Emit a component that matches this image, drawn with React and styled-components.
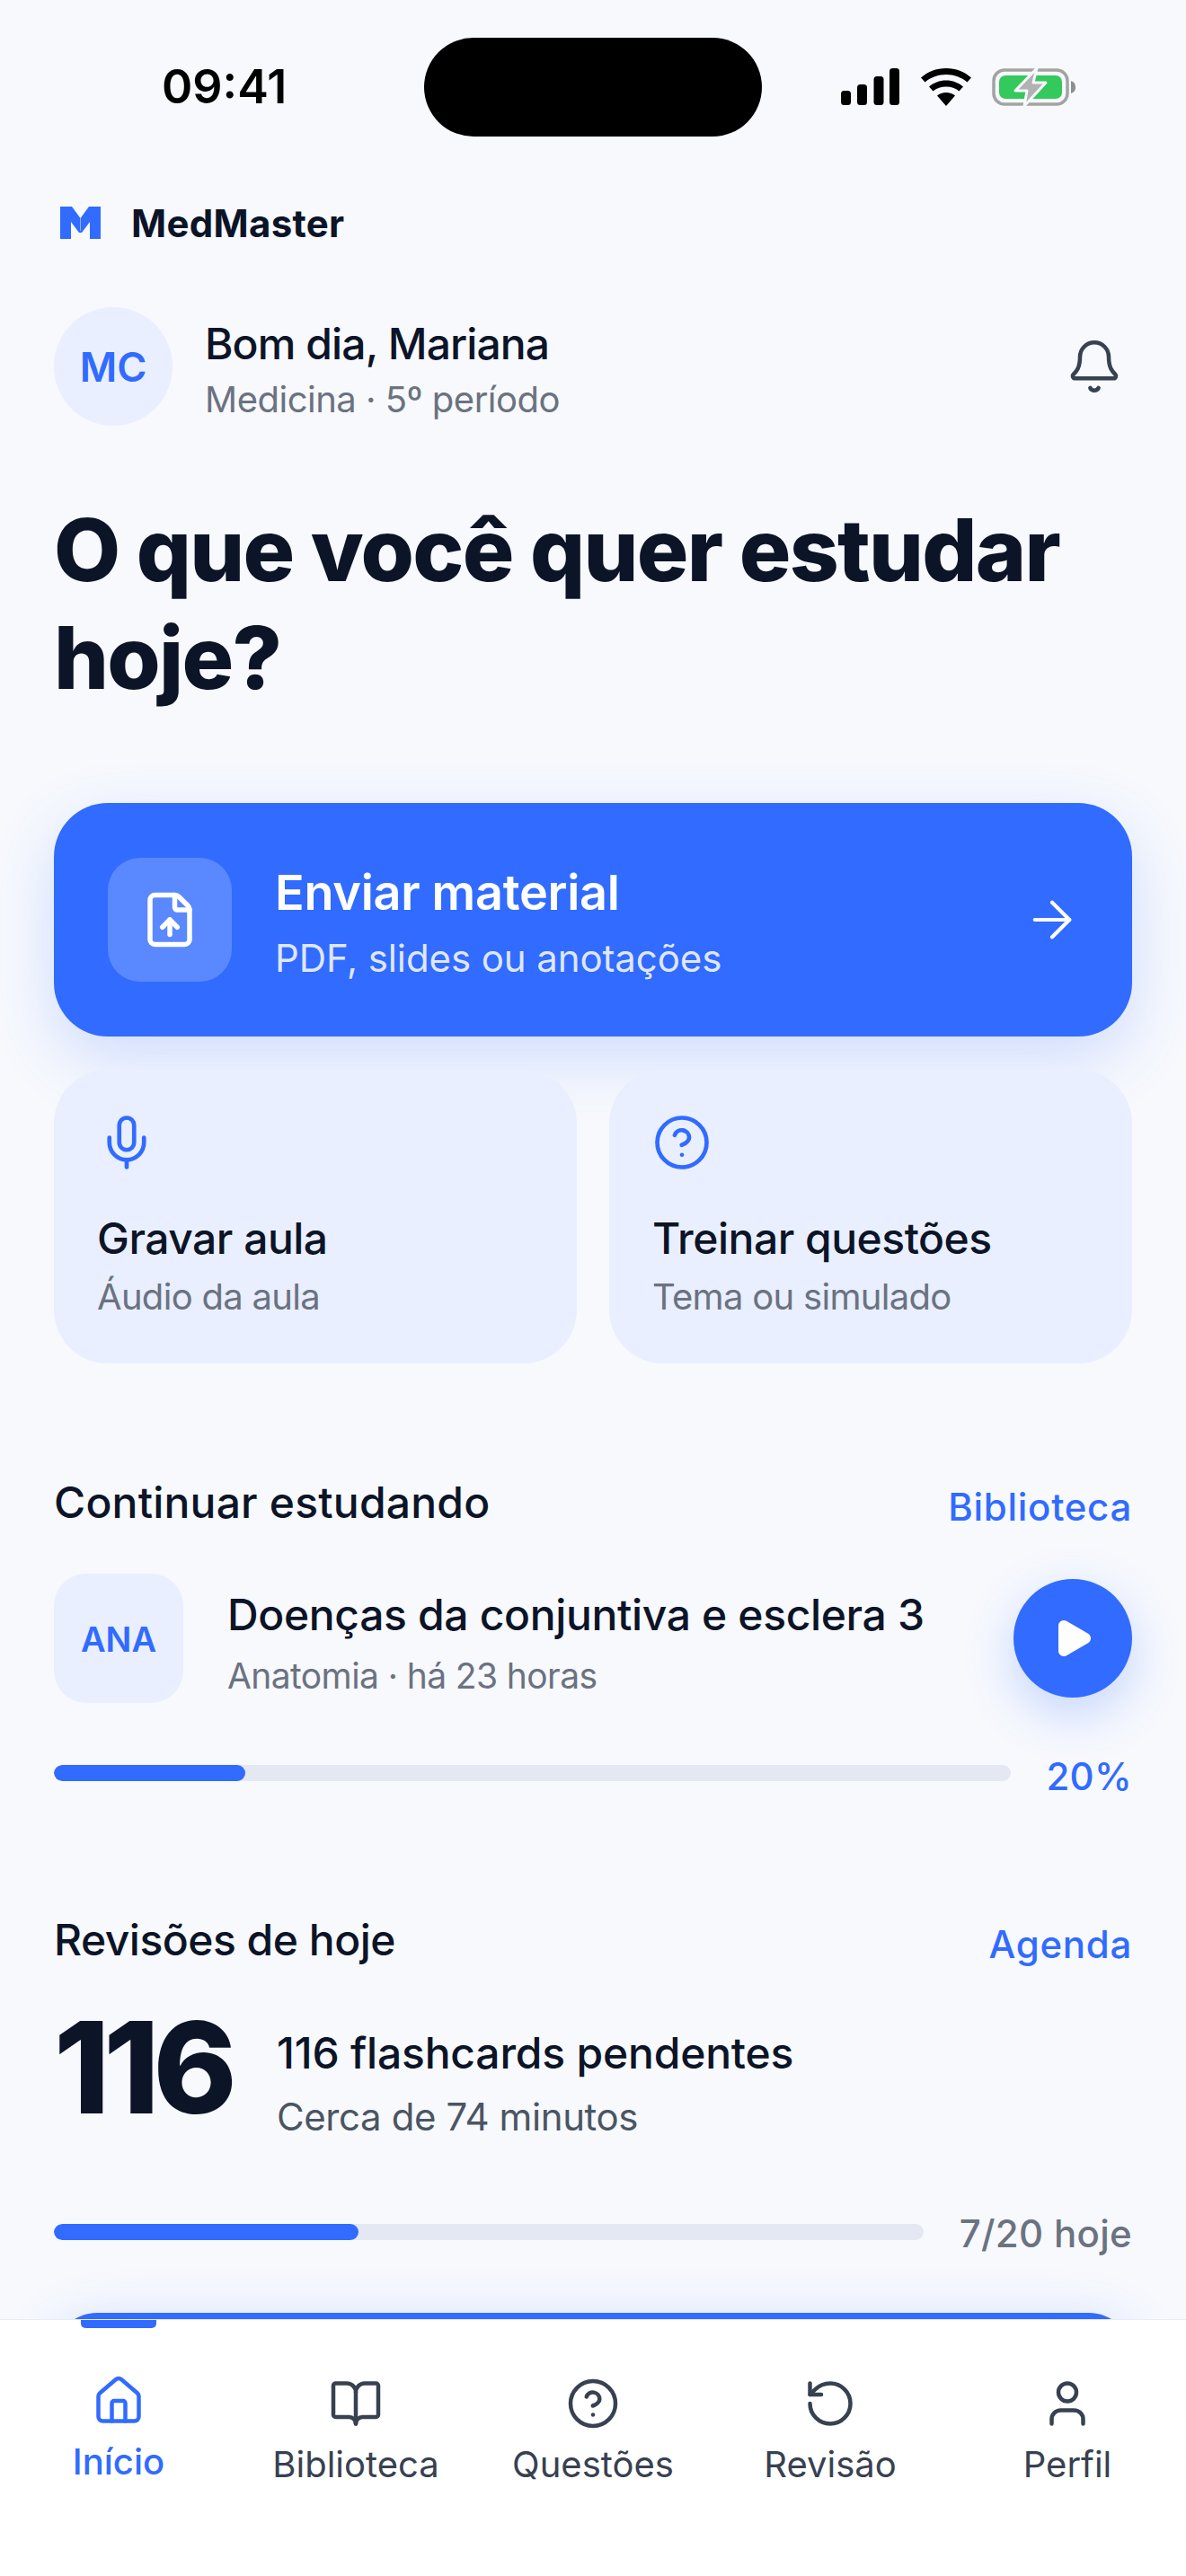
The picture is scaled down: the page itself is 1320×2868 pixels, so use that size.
import React from "react";
import styled, { createGlobalStyle } from "styled-components";
import { ArrowRight, Bell, BookOpen, CircleHelp, FileUp, House, Mic, Play, RotateCcw, User } from "lucide-react";

const BLUE = "#316bff";
const INK = "#0c1427";
const GRAY = "#6b7280";

const GlobalStyle = createGlobalStyle`
  html, body { margin: 0; padding: 0; background: #f7f9fd; }
  * { box-sizing: border-box; }
  body { font-family: Inter, "Noto Sans", sans-serif; }
`;

function App() {
  return (
    <Screen>
      <GlobalStyle />
      <Main>
        <StatusBar>
          <Time>09:41</Time>
          <Island />
          <StatusIcons>
            <svg width="66" height="42" viewBox="0 0 66 42" fill="#000">
              <rect x="0" y="25" width="11" height="16" rx="3.500" />
              <rect x="18" y="18" width="11" height="23" rx="3.500" />
              <rect x="36.500" y="9" width="11" height="32" rx="3.500" />
              <rect x="54" y="0" width="11" height="41" rx="3.500" />
            </svg>
            <svg width="58" height="42" viewBox="0 0 58 42" fill="#000">
              <path d="M29 0c11 0 20.500 4 28 10.500l-4.500 5C46 10 38 7 29 7S12 10 5.500 15.500L1 10.500C8.500 4 18 0 29 0z" />
              <path d="M29 13.500c7.500 0 14 2.700 19 7l-4.500 5C39.500 22.200 34.500 20.500 29 20.500s-10.500 1.700-14.500 5L10 20.500c5-4.300 11.500-7 19-7z" />
              <path d="M29 27c4 0 7.500 1.300 10 3.500L29 42 19 30.500c2.500-2.200 6-3.500 10-3.500z" />
            </svg>
            <svg width="93" height="46" viewBox="0 0 93 46">
              <rect x="2" y="4" width="82" height="38" rx="12" fill="none" stroke="#a3a3a3" strokeWidth="3.500" />
              <rect x="8" y="10" width="70" height="26" rx="7" fill="#34c95c" />
              <path d="M88 16c3 1 5 3 5 7s-2 6-5 7z" fill="#8e8e8e" />
              <path d="M50 2 26 27h13l-3 17 24-26H46z" fill="#b2b2b2" stroke="#f7f9fd" strokeWidth="3" strokeLinejoin="round" />
            </svg>
          </StatusIcons>
        </StatusBar>

        <Content>
          <Brand>
            <svg width="45" height="36" viewBox="0 0 45 36">
              <path d="M0 0h13l9.500 13L32 0h13v36H33V17l-9 12h-3l-9-12v19H0z" fill={BLUE} />
              <path d="M22.500 13v14" stroke="#8fb0ff" strokeWidth="1" />
            </svg>
            <BrandName>MedMaster</BrandName>
          </Brand>

          <Profile>
            <Avatar>MC</Avatar>
            <ProfileText>
              <Greeting>Bom dia, Mariana</Greeting>
              <Course>Medicina · 5º período</Course>
            </ProfileText>
            <Bell size={64} strokeWidth={1.7} color="#374151" />
          </Profile>

          <Headline>O que você quer estudar hoje?</Headline>

          <PrimaryCard>
            <PrimaryIcon>
              <FileUp size={66} strokeWidth={2} color="#fff" />
            </PrimaryIcon>
            <PrimaryText>
              <PrimaryTitle>Enviar material</PrimaryTitle>
              <PrimarySub>PDF, slides ou anotações</PrimarySub>
            </PrimaryText>
            <ArrowRight size={66} strokeWidth={1.5} color="#fff" />
          </PrimaryCard>

          <ActionGrid>
            <ActionCard>
              <ActionIcon><Mic size={66} strokeWidth={1.7} color={BLUE} /></ActionIcon>
              <ActionTitle>Gravar aula</ActionTitle>
              <ActionSub>Áudio da aula</ActionSub>
            </ActionCard>
            <ActionCard>
              <ActionIcon><CircleHelp size={66} strokeWidth={1.7} color={BLUE} /></ActionIcon>
              <ActionTitle>Treinar questões</ActionTitle>
              <ActionSub>Tema ou simulado</ActionSub>
            </ActionCard>
          </ActionGrid>

          <SectionHead $top={125}>
            <SectionTitle $spacing={0.2}>Continuar estudando</SectionTitle>
            <SectionLink>Biblioteca</SectionLink>
          </SectionHead>

          <LessonRow>
            <Thumb>ANA</Thumb>
            <LessonText>
              <LessonTitle>Doenças da conjuntiva e esclera 3</LessonTitle>
              <LessonSub>Anatomia · há 23 horas</LessonSub>
            </LessonText>
            <PlayButton>
              <Play size={48} fill="#fff" color="#fff" strokeWidth={2} />
            </PlayButton>
          </LessonRow>

          <ProgressRow $top={69}>
            <Track $width={1065}>
              <Fill style={{ width: "20%" }} />
            </Track>
            <Percent>20%</Percent>
          </ProgressRow>

          <SectionHead $top={147}>
            <SectionTitle $spacing={-0.5}>Revisões de hoje</SectionTitle>
            <SectionLink>Agenda</SectionLink>
          </SectionHead>

          <ReviewRow>
            <BigNumber>116</BigNumber>
            <ReviewText>
              <ReviewTitle>116 flashcards pendentes</ReviewTitle>
              <ReviewSub>Cerca de 74 minutos</ReviewSub>
            </ReviewText>
          </ReviewRow>

          <ProgressRow $top={93}>
            <Track $width={968}>
              <Fill style={{ width: "35%" }} />
            </Track>
            <TodayCount>7/20 hoje</TodayCount>
          </ProgressRow>

          <ReviewButton />
        </Content>
      </Main>

      <Nav>
        <NavIndicator />
        <NavItem $active>
          <House size={60} strokeWidth={1.8} />
          <NavLabel $active>Início</NavLabel>
        </NavItem>
        <NavItem>
          <BookOpen size={60} strokeWidth={1.8} />
          <NavLabel>Biblioteca</NavLabel>
        </NavItem>
        <NavItem>
          <CircleHelp size={60} strokeWidth={1.8} />
          <NavLabel>Questões</NavLabel>
        </NavItem>
        <NavItem>
          <RotateCcw size={60} strokeWidth={1.8} />
          <NavLabel>Revisão</NavLabel>
        </NavItem>
        <NavItem>
          <User size={60} strokeWidth={1.8} />
          <NavLabel>Perfil</NavLabel>
        </NavItem>
      </Nav>
    </Screen>
  );
}

const Screen = styled.div`
  width: 1320px;
  height: 2868px;
  display: flex;
  flex-direction: column;
  overflow: hidden;
  background: #f7f9fd;
  color: ${INK};
`;

const Main = styled.main`
  flex: 1;
  min-height: 0;
  overflow: hidden;
`;

const StatusBar = styled.div`
  height: 194px;
  padding: 42px 60px 0 180px;
  display: flex;
  align-items: flex-start;
`;

const Time = styled.div`
  width: 292px;
  height: 110px;
  line-height: 110px;
  font-size: 52px;
  font-weight: 600;
  color: #000;
`;

const Island = styled.div`
  width: 376px;
  height: 110px;
  border-radius: 55px;
  background: #000;
`;

const StatusIcons = styled.div`
  margin-left: 88px;
  height: 110px;
  display: flex;
  align-items: center;
  gap: 22px;
`;

const Content = styled.div`
  padding: 0 60px;
`;

const Brand = styled.div`
  height: 108px;
  padding: 0 0 0 7px;
  display: flex;
  align-items: center;
  gap: 34px;
`;

const BrandName = styled.div`
  font-size: 42px;
  font-weight: 700;
  letter-spacing: 0.3px;
`;

const Profile = styled.div`
  margin-top: 40px;
  display: flex;
  align-items: center;
  gap: 36px;
  padding-right: 10px;
`;

const Avatar = styled.div`
  width: 132px;
  height: 132px;
  border-radius: 50%;
  background: #e9efff;
  color: ${BLUE};
  font-size: 45px;
  font-weight: 600;
  display: flex;
  align-items: center;
  justify-content: center;
`;

const ProfileText = styled.div`
  flex: 1;
  padding-top: 8px;
  display: flex;
  flex-direction: column;
  gap: 6px;
`;

const Greeting = styled.div`
  font-size: 48px;
  font-weight: 500;
  line-height: 60px;
  letter-spacing: -0.9px;
`;

const Course = styled.div`
  font-size: 40px;
  line-height: 52px;
  color: ${GRAY};
  letter-spacing: -0.5px;
`;

const Headline = styled.h1`
  margin: 78px 0 0;
  width: 1200px;
  font-size: 96px;
  line-height: 120px;
  font-weight: 800;
  letter-spacing: -1.7px;
`;

const PrimaryCard = styled.div`
  margin-top: 102px;
  height: 260px;
  border-radius: 60px;
  background: ${BLUE};
  box-shadow: 0 24px 72px rgba(49, 107, 255, 0.2);
  padding: 0 56px 0 60px;
  display: flex;
  align-items: center;
  gap: 48px;
`;

const PrimaryIcon = styled.div`
  width: 138px;
  height: 138px;
  border-radius: 36px;
  background: rgba(255, 255, 255, 0.2);
  display: flex;
  align-items: center;
  justify-content: center;
`;

const PrimaryText = styled.div`
  flex: 1;
  padding-top: 5px;
  color: #fff;
`;

const PrimaryTitle = styled.div`
  font-size: 54px;
  line-height: 68px;
  font-weight: 600;
  letter-spacing: -0.3px;
`;

const PrimarySub = styled.div`
  margin-top: 13px;
  font-size: 42px;
  line-height: 52px;
  color: rgba(255, 255, 255, 0.85);
  letter-spacing: -0.1px;
`;

const ActionGrid = styled.div`
  margin-top: 37px;
  display: grid;
  grid-template-columns: 1fr 1fr;
  gap: 36px;
`;

const ActionCard = styled.div`
  height: 327px;
  border-radius: 60px;
  background: #e9efff;
  padding: 48px 48px 0;
`;

const ActionIcon = styled.div`
  height: 66px;
`;

const ActionTitle = styled.div`
  margin-top: 44px;
  font-size: 48px;
  line-height: 60px;
  font-weight: 550;
  letter-spacing: -0.5px;
`;

const ActionSub = styled.div`
  margin-top: 9px;
  font-size: 40px;
  line-height: 52px;
  color: ${GRAY};
  letter-spacing: -0.7px;
`;

const SectionHead = styled.div`
  margin-top: ${(p) => p.$top}px;
  display: flex;
  justify-content: space-between;
  align-items: center;
`;

const SectionTitle = styled.div`
  font-size: 48px;
  line-height: 60px;
  font-weight: 500;
  letter-spacing: ${(p) => p.$spacing}px;
`;

const SectionLink = styled.div`
  margin-top: 8px;
  font-size: 42px;
  font-weight: 550;
  letter-spacing: 0.7px;
  color: ${BLUE};
`;

const LessonRow = styled.div`
  margin-top: 49px;
  display: flex;
  align-items: center;
`;

const Thumb = styled.div`
  width: 144px;
  height: 144px;
  border-radius: 36px;
  background: #e9efff;
  color: ${BLUE};
  font-size: 38px;
  font-weight: 600;
  padding-top: 2px;
  display: flex;
  align-items: center;
  justify-content: center;
`;

const LessonText = styled.div`
  flex: 1;
  margin-left: 49px;
  padding-top: 11px;
`;

const LessonTitle = styled.div`
  font-size: 48px;
  line-height: 60px;
  font-weight: 550;
  letter-spacing: -0.35px;
`;

const LessonSub = styled.div`
  margin-top: 12px;
  font-size: 39px;
  line-height: 52px;
  color: ${GRAY};
  letter-spacing: -0.6px;
`;

const PlayButton = styled.div`
  width: 132px;
  height: 132px;
  border-radius: 50%;
  background: ${BLUE};
  box-shadow: 0 18px 54px rgba(49, 107, 255, 0.25);
  display: flex;
  align-items: center;
  justify-content: center;
`;

const ProgressRow = styled.div`
  margin-top: ${(p) => p.$top}px;
  height: 18px;
  display: flex;
  align-items: center;
  justify-content: space-between;
`;

const Track = styled.div`
  width: ${(p) => p.$width}px;
  height: 18px;
  border-radius: 9px;
  background: #e3e8f2;
  overflow: hidden;
`;

const Fill = styled.div`
  height: 100%;
  border-radius: 9px;
  background: ${BLUE};
`;

const Percent = styled.div`
  padding-top: 6px;
  font-size: 42px;
  font-weight: 550;
  letter-spacing: 0.3px;
  color: ${BLUE};
`;

const ReviewRow = styled.div`
  margin-top: 37px;
  display: flex;
  align-items: flex-start;
  gap: 52px;
`;

const BigNumber = styled.div`
  width: 196px;
  font-size: 141px;
  line-height: 150px;
  font-weight: 800;
  letter-spacing: -7px;
`;

const ReviewText = styled.div`
  flex: 1;
  padding-top: 30px;
`;

const ReviewTitle = styled.div`
  font-size: 48px;
  line-height: 58px;
  font-weight: 550;
  letter-spacing: -0.2px;
`;

const ReviewSub = styled.div`
  margin-top: 16px;
  font-size: 42px;
  line-height: 52px;
  color: #4b5563;
  letter-spacing: -0.4px;
`;

const TodayCount = styled.div`
  padding-top: 3px;
  font-size: 42px;
  font-weight: 500;
  letter-spacing: 0.3px;
  color: ${GRAY};
`;

const ReviewButton = styled.div`
  margin-top: 81px;
  height: 160px;
  border-radius: 48px;
  background: ${BLUE};
  box-shadow: 0 12px 60px rgba(49, 107, 255, 0.22);
`;

const Nav = styled.nav`
  position: relative;
  height: 286px;
  flex: none;
  background: #fff;
  border-top: 1px solid #e8ebf2;
  display: grid;
  grid-template-columns: repeat(5, 1fr);
  align-items: start;
`;

const NavIndicator = styled.div`
  position: absolute;
  top: 0;
  left: 90px;
  width: 84px;
  height: 9px;
  border-radius: 0 0 5px 5px;
  background: ${BLUE};
`;

const NavItem = styled.div`
  padding-top: ${(p) => (p.$active ? 60 : 63)}px;
  display: flex;
  flex-direction: column;
  align-items: center;
  color: ${(p) => (p.$active ? BLUE : "#374151")};
`;

const NavLabel = styled.div`
  margin-top: 12px;
  font-size: 40px;
  line-height: 52px;
  font-weight: ${(p) => (p.$active ? 500 : 400)};
`;

export default App;
